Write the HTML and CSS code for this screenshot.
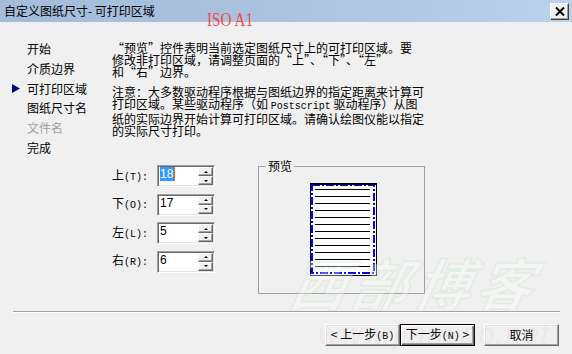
FILE: index.html
```html
<!DOCTYPE html>
<html lang="zh-CN">
<head>
<meta charset="utf-8">
<title>自定义图纸尺寸- 可打印区域</title>
<link rel="stylesheet" href="styles.css">
</head>
<body>
<div class="window">
  <header class="titlebar">
    <span class="title">自定义图纸尺寸- 可打印区域</span>
    <span class="stamp">ISO A1</span>
    <button class="close" aria-label="关闭"><svg width="10" height="9" viewBox="0 0 10 9"><path d="M1 0.5L9 8.5M9 0.5L1 8.5" stroke="#000" stroke-width="2"/></svg></button>
  </header>
  <div class="main">
    <ul class="steps">
      <li><span class="mark"></span>开始</li>
      <li><span class="mark"></span>介质边界</li>
      <li><span class="mark"><svg width="8" height="9" viewBox="0 0 8 9"><path d="M0 0L8 4.5L0 9Z" fill="#000080"/></svg></span>可打印区域</li>
      <li><span class="mark"></span>图纸尺寸名</li>
      <li class="disabled"><span class="mark"></span>文件名</li>
      <li><span class="mark"></span>完成</li>
    </ul>
    <div class="content">
      <p class="desc">“预览”控件表明当前选定图纸尺寸上的可打印区域。要<br>修改非打印区域，请调整页面的“上”、“下”、“左”<br>和“右”边界。</p>
      <p class="desc note">注意：大多数驱动程序根据与图纸边界的指定距离来计算可<br>打印区域。某些驱动程序（如 <span class="lat">Postscript</span> 驱动程序）从图<br>纸的实际边界开始计算可打印区域。请确认绘图仪能以指定<br>的实际尺寸打印。</p>
      <div class="lower">
        <div class="margins">
          <div class="row">
            <label class="lbl">上<span class="acc">(T):</span></label>
            <div class="spin"><span class="val"><span class="sel">18</span></span><span class="arrows"><span class="up"></span><span class="down"></span></span></div>
          </div>
          <div class="row">
            <label class="lbl">下<span class="acc">(O):</span></label>
            <div class="spin"><span class="val">17</span><span class="arrows"><span class="up"></span><span class="down"></span></span></div>
          </div>
          <div class="row">
            <label class="lbl">左<span class="acc">(L):</span></label>
            <div class="spin"><span class="val">5</span><span class="arrows"><span class="up"></span><span class="down"></span></span></div>
          </div>
          <div class="row">
            <label class="lbl">右<span class="acc">(R):</span></label>
            <div class="spin"><span class="val">6</span><span class="arrows"><span class="up"></span><span class="down"></span></span></div>
          </div>
        </div>
        <div class="group">
          <span class="legend">预览</span>
          <svg class="page" width="67" height="93" viewBox="0 0 67 93">
            <rect x="0.5" y="0.5" width="66" height="92" fill="#fff" stroke="#000"/>
            <rect x="2" y="2" width="62" height="88" fill="none" stroke="#0000ff" stroke-width="2" stroke-dasharray="8 2 2 2"/>
            <path d="M0.5 1.5H66.5" stroke="#000" stroke-width="1"/>
            <path d="M5 6.5H60M5 13.5H60M5 20.5H60M5 27.5H60M5 34.5H60M5 41.5H60M5 48.5H60M5 55.5H60M5 62.5H60M5 69.5H60M5 76.5H60M5 83.5H60" stroke="#000" stroke-width="1"/>
          </svg>
        </div>
      </div>
    </div>
  </div>
  <div class="sep"></div>
  <footer class="buttons">
    <button class="btn">&lt; 上一步<span class="acc">(B)</span></button>
    <button class="btn default">下一步<span class="acc">(N)</span> &gt;</button>
    <button class="btn cancel">取消</button>
  </footer>
  <div class="wm-logo" aria-hidden="true">西部博客</div>
  <div class="wm-url" aria-hidden="true">www.jiancao.net</div>
</div>
</body>
</html>
```

FILE: styles.css
```css
html, body {
  margin: 0;
  padding: 0;
}

body {
  background: #f0f0f0;
  font-family: "Noto Sans CJK SC", "Noto Sans", sans-serif;
  font-size: 12px;
  color: #000;
}

.window {
  width: 572px;
  height: 354px;
  position: relative;
  overflow: hidden;
  background: #f0f0f0;
  display: flex;
  flex-direction: column;
}

.titlebar {
  position: relative;
  flex: none;
  height: 22px;
  box-sizing: border-box;
  display: flex;
  align-items: center;
  padding: 0 3px 0 4px;
  background: linear-gradient(to right, #a3bcd9, #abc3de 50%, #bad2eb);
}

.title {
  font-size: 12px;
  line-height: 14px;
  white-space: nowrap;
}

.stamp {
  position: absolute;
  left: 207px;
  top: 10px;
  font-family: "Liberation Serif", serif;
  font-size: 19px;
  line-height: 19px;
  color: #f04a4a;
  transform: scaleX(0.8);
  transform-origin: left center;
  white-space: nowrap;
}

.close {
  margin-left: auto;
  width: 19px;
  height: 17px;
  padding: 0;
  box-sizing: border-box;
  border: 1px solid;
  border-color: #fff #404040 #404040 #fff;
  box-shadow: inset -1px -1px #a0a0a0;
  background: #f0f0f0;
  display: flex;
  align-items: center;
  justify-content: center;
}

.main {
  flex: none;
  height: 289px;
  display: flex;
}

.steps {
  list-style: none;
  margin: 0;
  padding: 17px 0 0 12px;
  width: 100px;
  flex: none;
}

.steps li {
  display: flex;
  align-items: center;
  height: 19.8px;
  line-height: 19.8px;
  white-space: nowrap;
}

.steps .disabled {
  color: #a0a0a0;
}

.mark {
  width: 15px;
  flex: none;
  display: flex;
  align-items: center;
}

.content {
  flex: 1;
  padding-top: 20px;
}

.desc {
  margin: 0;
  line-height: 12px;
  white-space: nowrap;
}

.note {
  margin-top: 8px;
}

.lat {
  font-family: "Liberation Mono", monospace;
  font-size: 10px;
}

.lower {
  display: flex;
  align-items: flex-start;
  margin-top: 28px;
}

.margins {
  width: 103px;
  flex: none;
  display: flex;
  flex-direction: column;
  gap: 6.5px;
}

.row {
  display: flex;
  align-items: center;
  height: 22px;
}

.lbl {
  width: 45px;
  flex: none;
  white-space: nowrap;
  line-height: 14px;
}

.acc {
  font-family: "Liberation Mono", monospace;
  font-size: 10px;
}

.spin {
  width: 58px;
  height: 22px;
  box-sizing: border-box;
  display: flex;
  padding: 1px;
  border: 1px solid;
  border-color: #a0a0a0 #fff #fff #a0a0a0;
  box-shadow: inset 1px 1px #696969, inset -1px -1px #e3e3e3;
  background: #fff;
}

.val {
  flex: 1;
  padding: 0 0 0 1px;
  font-family: "Liberation Sans", sans-serif;
  font-size: 12px;
  line-height: 14px;
}

.sel {
  display: inline-block;
  background: #3399ff;
  color: #fff;
  border-right: 1px solid #cc6600;
  padding-right: 1px;
}

.arrows {
  width: 15px;
  flex: none;
  display: flex;
  flex-direction: column;
}

.up, .down {
  flex: 1;
  box-sizing: border-box;
  border: 1px solid;
  border-color: #fff #696969 #696969 #fff;
  box-shadow: inset -1px -1px #a0a0a0;
  background: #f0f0f0;
  display: flex;
  align-items: center;
  justify-content: center;
}

.up::after, .down::after {
  content: "";
  width: 0;
  height: 0;
  border-style: solid;
  border-color: transparent;
}

.up::after {
  border-width: 0 2px 2px 2px;
  border-bottom-color: #000;
}

.down::after {
  border-width: 2px 2px 0 2px;
  border-top-color: #000;
}

.group {
  position: relative;
  flex: none;
  margin-left: 43px;
  margin-top: 1px;
  width: 167px;
  height: 128px;
  box-sizing: border-box;
  border: 1px solid #a0a0a0;
}

.legend {
  position: absolute;
  top: -7px;
  left: 7px;
  padding: 0 2px;
  line-height: 12px;
  background: #f0f0f0;
}

.page {
  display: block;
  margin: 16px 0 0 51px;
}

.sep {
  flex: none;
  margin: 0 12px 0 13px;
  border-top: 1px solid #a0a0a0;
  border-bottom: 1px solid #fff;
}

.buttons {
  flex: none;
  display: flex;
  justify-content: flex-end;
  padding: 11px 13px 0 0;
}

.btn {
  width: 75px;
  height: 22px;
  box-sizing: border-box;
  padding: 0;
  font-family: "Noto Sans CJK SC", sans-serif;
  font-size: 12px;
  line-height: 14px;
  color: #000;
  background: #f0f0f0;
  border: 1px solid;
  border-color: #fff #696969 #696969 #fff;
  box-shadow: inset -1px -1px #a0a0a0, inset 1px 1px #e3e3e3;
  white-space: nowrap;
}

.btn.default {
  border: 1px solid #000;
  box-shadow: inset 1px 1px #fff, inset -1px -1px #696969, inset -2px -2px #a0a0a0;
}

.btn.cancel {
  margin-left: 9px;
}

.wm-logo {
  position: absolute;
  left: 292px;
  top: 252px;
  font-family: "Noto Sans CJK SC", sans-serif;
  font-weight: 700;
  font-size: 56px;
  line-height: 60px;
  font-style: italic;
  letter-spacing: 6px;
  color: rgba(250, 252, 250, 0.35);
  -webkit-text-stroke: 1.5px rgba(170, 215, 170, 0.22);
  transform: skewX(-12deg);
  pointer-events: none;
  white-space: nowrap;
}

.wm-url {
  position: absolute;
  left: 318px;
  top: 318px;
  font-family: "Liberation Sans", sans-serif;
  font-style: italic;
  font-size: 30px;
  line-height: 32px;
  letter-spacing: 1px;
  color: rgba(220, 150, 150, 0.1);
  pointer-events: none;
  white-space: nowrap;
}
```
